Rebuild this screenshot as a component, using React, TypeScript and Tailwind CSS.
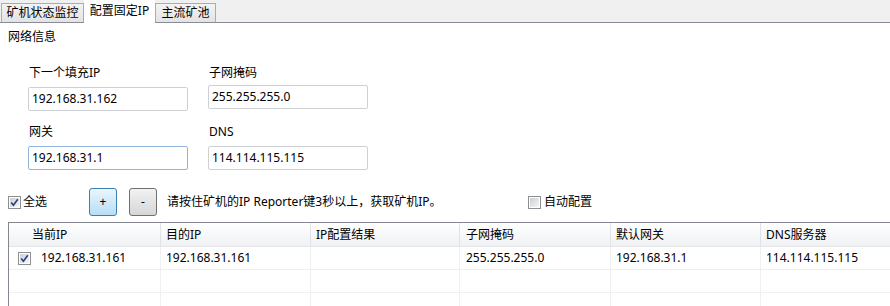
import React from 'react';

const font = "font-['Noto_Sans','Noto_Sans_CJK_SC',sans-serif]";

function CheckBox({ checked }: { checked: boolean }) {
  return (
    <span className="flex h-[13px] w-[13px] shrink-0 items-center justify-center border border-[#8e8f8f] bg-white p-px">
      <span className="flex h-full w-full items-center justify-center bg-gradient-to-br from-[#cbcfd5] to-[#f6f6f6]">
        {checked && (
          <svg width="9" height="9" viewBox="0 0 9 9">
            <path d="M1.2 4.6 L3.4 7.2 L7.8 1.2" fill="none" stroke="#2a3c8a" strokeWidth="1.6" />
          </svg>
        )}
      </span>
    </span>
  );
}

function Field({ label, value, focused, gap }: { label: string; value: string; focused?: boolean; gap: string }) {
  return (
    <div className="flex w-[160px] flex-col">
      <div className="h-[16px] pl-px">{label}</div>
      <div
        className={`${gap} flex h-[24px] items-center rounded-[2px] border pl-[3px] text-[12px] ${
          focused ? 'border-[#8fb6dc]' : 'border-[#cdd1d6]'
        }`}
      >
        {value}
      </div>
    </div>
  );
}

const columns = [
  { label: '当前IP', w: 'w-[152px]', pad: 'pl-[23px]' },
  { label: '目的IP', w: 'w-[150px]', pad: 'pl-[5px]' },
  { label: 'IP配置结果', w: 'w-[149px]', pad: 'pl-[5px]' },
  { label: '子网掩码', w: 'w-[151px]', pad: 'pl-[6px]' },
  { label: '默认网关', w: 'w-[150px]', pad: 'pl-[5px]' },
  { label: 'DNS服务器', w: 'w-[160px]', pad: 'pl-[5px]' },
];

const rows = [['192.168.31.161', '192.168.31.161', '', '255.255.255.0', '192.168.31.1', '114.114.115.115'], [], []];

export default function App() {
  return (
    <div className={`h-[306px] w-[890px] overflow-hidden bg-white text-[12px] leading-[16px] text-black ${font}`}>
      <div className="flex h-[23px] items-end border-b border-[#898c95] bg-[#f0f0f0] pl-px">
        <div className="flex h-[19px] w-[83px] items-center justify-center border border-b-0 border-[#acacac] bg-gradient-to-b from-[#f3f3f3] to-[#e3e3e3]">
          矿机状态监控
        </div>
        <div className="relative -mb-px flex h-[23px] w-[71px] justify-center bg-white pt-[3px]">配置固定IP</div>
        <div className="flex h-[19px] w-[61px] items-center justify-center border border-b-0 border-[#acacac] bg-gradient-to-b from-[#f3f3f3] to-[#e3e3e3]">
          主流矿池
        </div>
      </div>

      <div className="mt-[6px] h-[16px] pl-[8px]">网络信息</div>

      <div className="mt-[20px] flex gap-[20px] pl-[28px]">
        <Field label="下一个填充IP" value="192.168.31.162" gap="mt-[6px]" />
        <Field label="子网掩码" value="255.255.255.0" gap="mt-[4px]" />
      </div>
      <div className="mt-[13px] flex gap-[20px] pl-[28px]">
        <Field label="网关" value="192.168.31.1" gap="mt-[6px]" focused />
        <Field label="DNS" value="114.114.115.115" gap="mt-[6px]" />
      </div>

      <div className="mt-[18px] flex h-[28px] items-center pl-[8px]">
        <div className="flex w-[81px] items-center gap-[2px]">
          <CheckBox checked />
          <span>全选</span>
        </div>
        <button className="h-[28px] w-[28px] rounded-[3px] border border-[#3c7fb1] bg-gradient-to-b from-[#eaf6fd] to-[#b7def5] pb-px">
          +
        </button>
        <button className="ml-[12px] h-[28px] w-[28px] rounded-[3px] border border-[#707070] bg-gradient-to-b from-[#f2f2f2] to-[#d6d6d6] pb-px">
          -
        </button>
        <div className="ml-[10px] w-[361px]">请按住矿机的IP Reporter键3秒以上，获取矿机IP。</div>
        <div className="flex items-center gap-[3px]">
          <CheckBox checked={false} />
          <span>自动配置</span>
        </div>
      </div>

      <div className="ml-[8px] mt-[6px] w-[920px] border-l border-t border-[#828790]">
        <div className="flex h-[24px] border-b border-[#e3e5e8] bg-gradient-to-b from-white to-[#eff1f3]">
          {columns.map((c) => (
            <div key={c.label} className={`${c.w} ${c.pad} flex items-center border-r border-[#dfe2e6]`}>
              {c.label}
            </div>
          ))}
        </div>
        {rows.map((r, i) => (
          <div key={i} className="flex h-[23px] border-b border-[#f0f0f0]">
            {columns.map((c, j) => (
              <div key={c.label} className={`${c.w} flex items-center border-r border-[#f0f0f0] ${j === 0 ? 'pl-[9px]' : c.pad}`}>
                {j === 0 && r.length > 0 && (
                  <>
                    <CheckBox checked />
                    <span className="ml-[10px]">{r[0]}</span>
                  </>
                )}
                {j > 0 && r[j]}
              </div>
            ))}
          </div>
        ))}
      </div>
    </div>
  );
}
